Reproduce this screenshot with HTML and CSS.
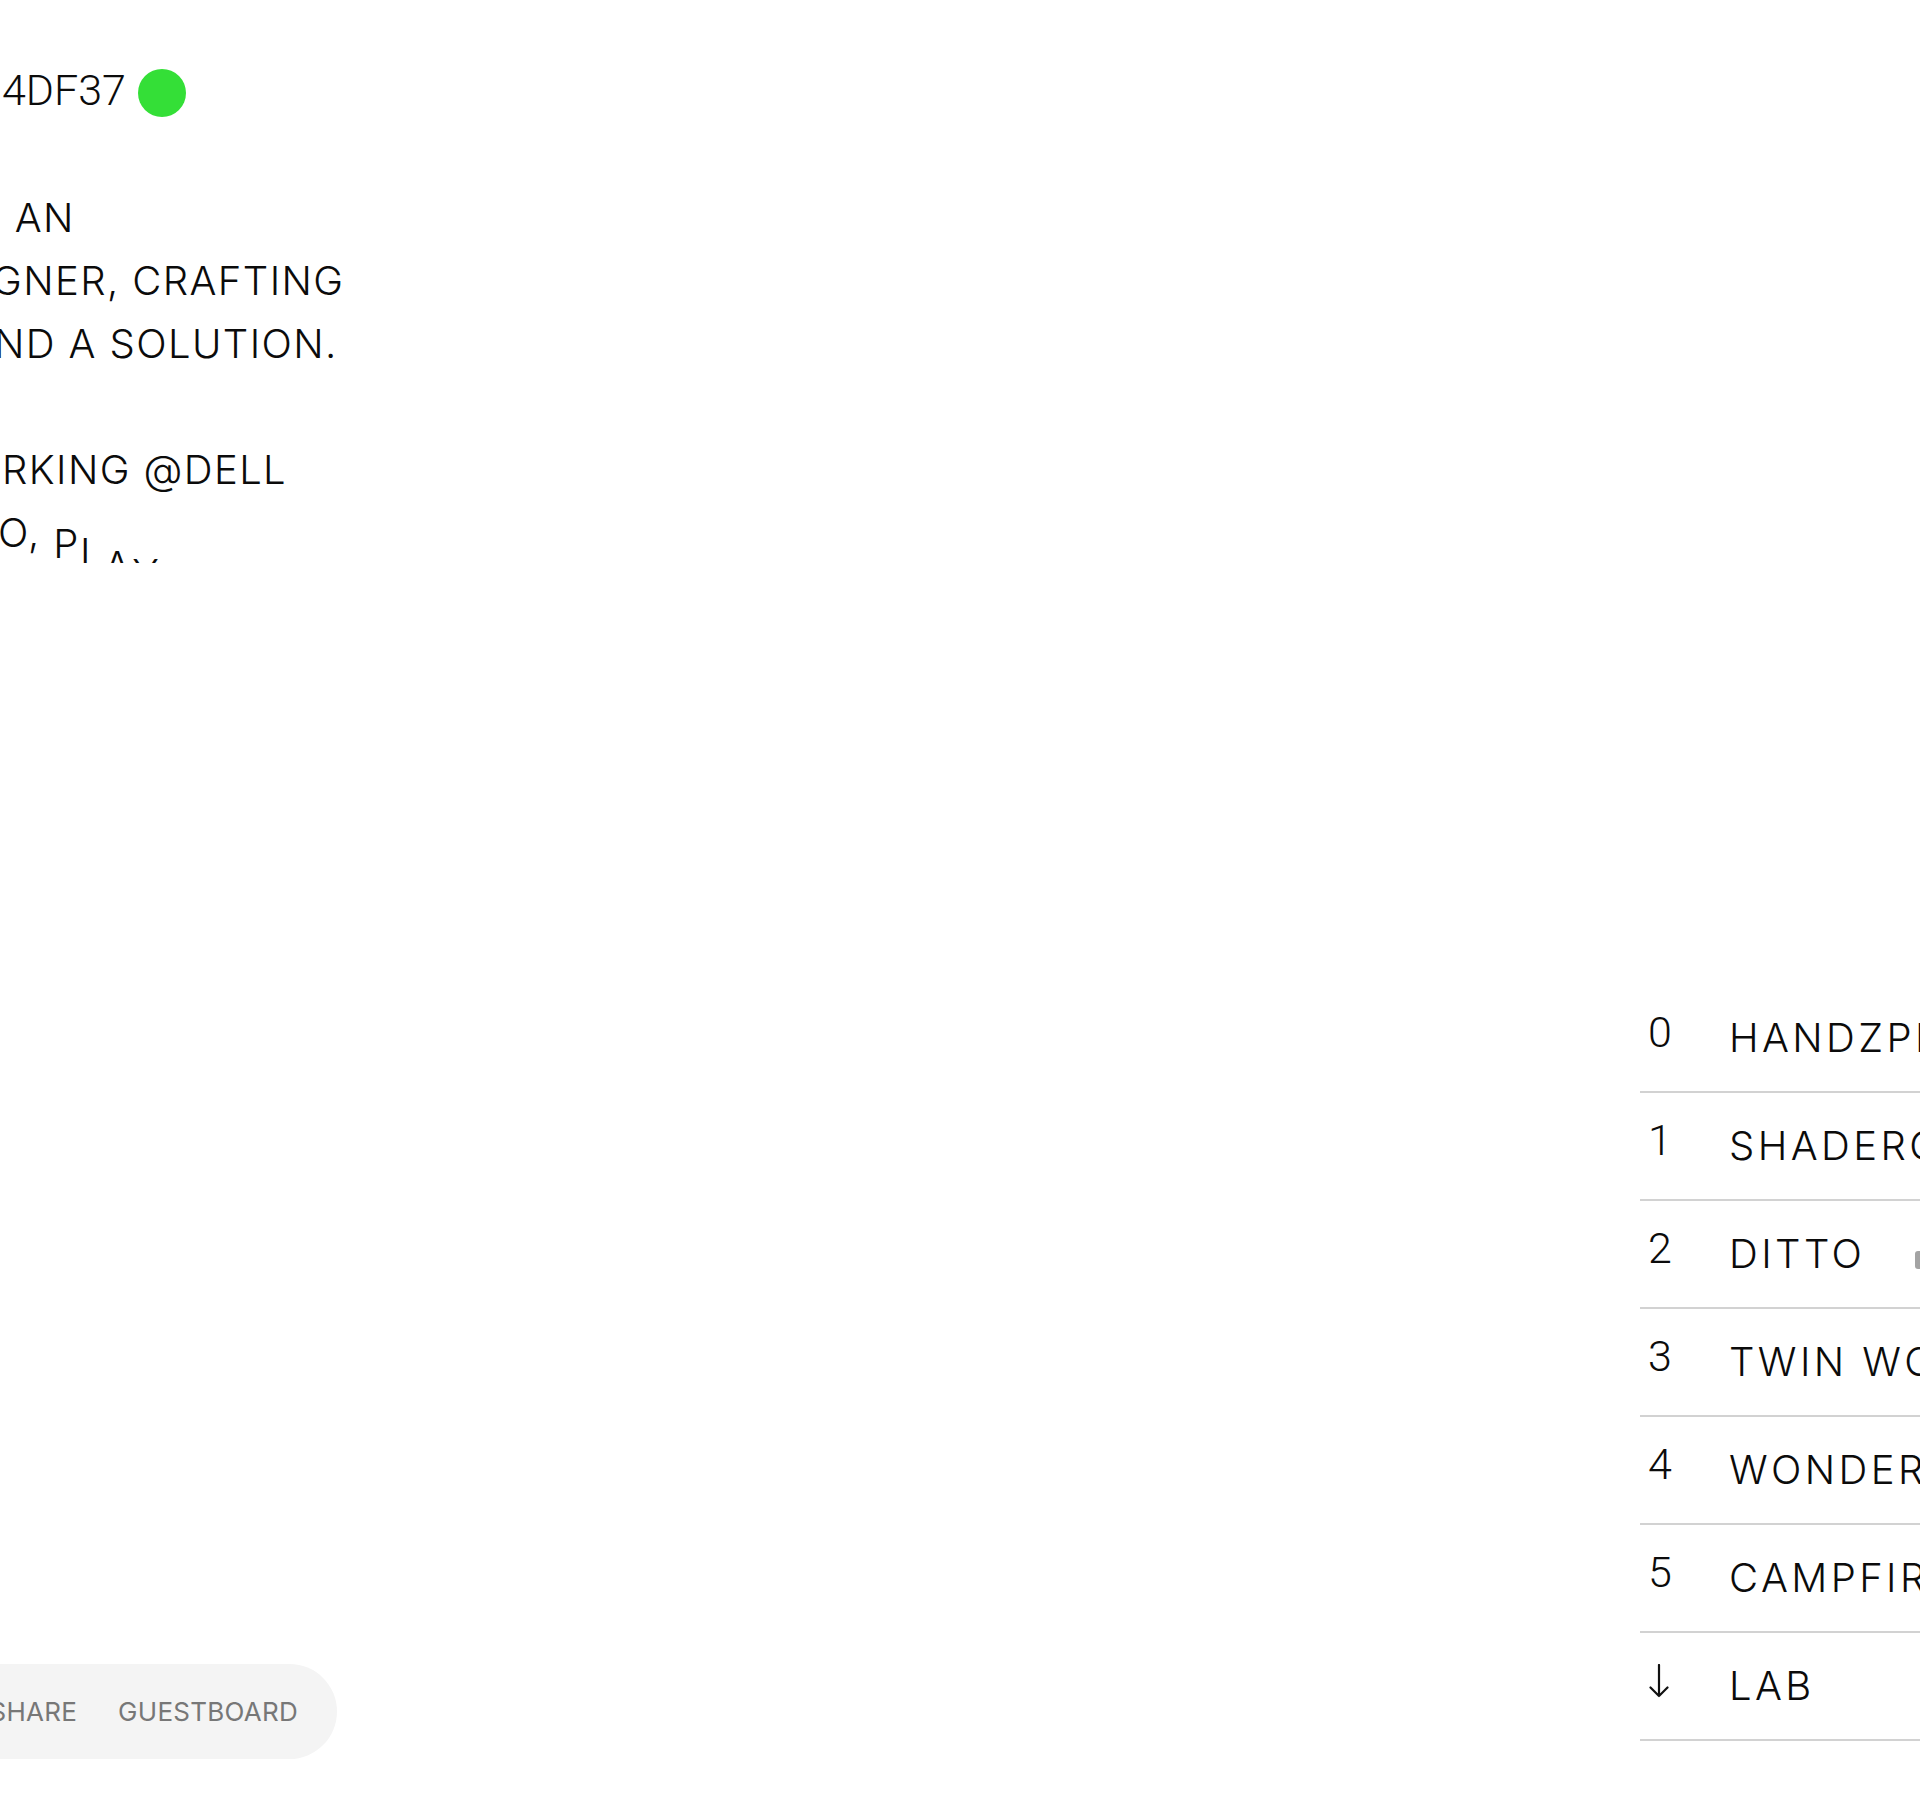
FILE: index.html
```html
<!DOCTYPE html>
<html lang="en">
<head>
<meta charset="utf-8">
<title>Portfolio</title>
<link rel="stylesheet" href="styles.css">
</head>
<body>
<div class="page">
  <section class="intro">
    <div class="intro-top">
      <p class="line hex"><span class="lead">COLOUR OF THE DAY #3</span><span class="seen nudge-in">4DF37</span><span class="dot"></span></p>
      <div class="bio">
        <p>
          <span class="line"><span class="lead">HI THERE, I'M</span><span class="seen nudge-in">&nbsp;AN</span></span>
          <span class="line"><span class="lead">INTERACTION DESI</span><span class="seen nudge-out-more">GNER, CRAFTING</span></span>
          <span class="line"><span class="lead">PLAYFUL WAYS TO FI</span><span class="seen nudge-out">ND A SOLUTION.</span></span>
        </p>
        <p>
          <span class="line"><span class="lead">CURRENTLY WO</span><span class="seen nudge-in">RKING @DELL</span></span>
          <span class="line"><span class="lead">AND IN MY STUDI</span><span class="seen nudge-out-most">O, <span class="drop d1">P</span><span class="drop d2">L</span><span class="drop d3">A</span><span class="drop d4">Y</span><span class="drop d5">I</span><span class="drop d6">N</span><span class="drop d7">G</span></span></span>
        </p>
      </div>
    </div>
    <nav class="dock">
      <div class="pill">
        <a class="pill-link" href="#">WORK</a>
        <a class="pill-link" href="#">INFO</a>
        <a class="pill-link" href="#">SHARE</a>
        <a class="pill-link" href="#">GUESTBOARD</a>
      </div>
    </nav>
  </section>
  <section class="work">
    <ol class="projects">
      <li class="project"><span class="num">0</span><span class="name">HANDZPLAY</span></li>
      <li class="project"><span class="num">1</span><span class="name">SHADERGRADIENT</span></li>
      <li class="project"><span class="num">2</span><span class="name">DITTO</span><span class="tag">WIP</span></li>
      <li class="project"><span class="num">3</span><span class="name">TWIN WORLDS</span></li>
      <li class="project"><span class="num">4</span><span class="name">WONDERWALL</span></li>
      <li class="project"><span class="num">5</span><span class="name">CAMPFIRE</span></li>
      <li class="project"><span class="num"><svg class="arrow" width="22" height="34" viewBox="0 0 22 34" aria-hidden="true"><path d="M11 1 V32 M2.5 23.5 L11 32 L19.5 23.5" fill="none" stroke="#111" stroke-width="2.2" stroke-linecap="round" stroke-linejoin="round"/></svg></span><span class="name">LAB</span></li>
    </ol>
  </section>
</div>
</body>
</html>
```
FILE: styles.css
```css
html, body {
  margin: 0;
  height: 1800px;
  overflow: hidden;
  background: #ffffff;
}

body {
  font-family: Inter, "Noto Sans", sans-serif;
  color: #0b0b0b;
}

.page {
  display: flex;
  height: 1800px;
}

/* ---------- left column ---------- */
.intro {
  flex: 0 0 1640px;
  display: flex;
  flex-direction: column;
  justify-content: space-between;
  padding: 59px 0 41px;
  box-sizing: border-box;
}

.line {
  display: flex;
  align-items: center;
  margin: 0 0 0 -600px;
  white-space: pre;
}

.lead {
  flex: none;
  width: 600px;
  text-align: right;
  overflow: hidden;
}

.nudge-in { margin-left: 2px; }
.nudge-out { margin-left: -6px; }
.nudge-out-more { margin-left: -8px; }
.nudge-out-most { margin-left: -2px; }

.hex {
  font-family: Roboto, "Liberation Sans", sans-serif;
  font-size: 43px;
  font-weight: 300;
  line-height: 63px;
}

.dot {
  flex: none;
  width: 48px;
  height: 48px;
  margin: 5px 0 0 12px;
  border-radius: 50%;
  background: #34df37;
}

.bio {
  margin-top: 64px;
  height: 377px;
  overflow: hidden;
  font-size: 40px;
  font-weight: 350;
  line-height: 63px;
  letter-spacing: 0.035em;
}

.bio p {
  margin: 0;
}

.bio p + p {
  margin-top: 63px;
}

.drop {
  display: inline-block;
}
.d1 { transform: translateY(11px); }
.d2 { transform: translateY(20px); }
.d3 { transform: translateY(33px); }
.d4 { transform: translateY(41px); }
.d5 { transform: translateY(52px); }
.d6 { transform: translateY(62px); }
.d7 { transform: translateY(72px); }

/* ---------- bottom dock ---------- */
.dock {
  width: 337px;
  display: flex;
  justify-content: flex-end;
}

.pill {
  flex: none;
  display: flex;
  align-items: center;
  gap: 41px;
  height: 95px;
  padding: 0 39px 0 60px;
  box-sizing: border-box;
  border-radius: 48px;
  background: #f4f4f4;
  font-size: 26px;
}

.pill-link {
  color: #777777;
  text-decoration: none;
  letter-spacing: 0.01em;
}

/* ---------- project list ---------- */
.work {
  flex: 0 0 700px;
  display: flex;
  flex-direction: column;
  justify-content: flex-end;
  padding-bottom: 59px;
  box-sizing: border-box;
}

.projects {
  list-style: none;
  margin: 0;
  padding: 0;
}

.project {
  display: flex;
  align-items: flex-start;
  height: 108px;
  box-sizing: border-box;
  padding: 21px 0 0 8px;
  border-bottom: 2px solid #d2d2d2;
}

.num {
  flex: 0 0 81px;
  font-family: Roboto, "Liberation Sans", sans-serif;
  font-size: 43px;
  font-weight: 300;
  line-height: 53px;
}

.arrow {
  display: block;
  margin-top: 10px;
}

.name {
  font-size: 40px;
  font-weight: 350;
  line-height: 63px;
  letter-spacing: 0.085em;
  white-space: nowrap;
}

.tag {
  flex: none;
  margin: 29px 0 0 50px;
  height: 18px;
  padding: 0 8px;
  border-radius: 3px;
  background: #a3a3a3;
  color: #ffffff;
  font-size: 11px;
  line-height: 18px;
}
```
